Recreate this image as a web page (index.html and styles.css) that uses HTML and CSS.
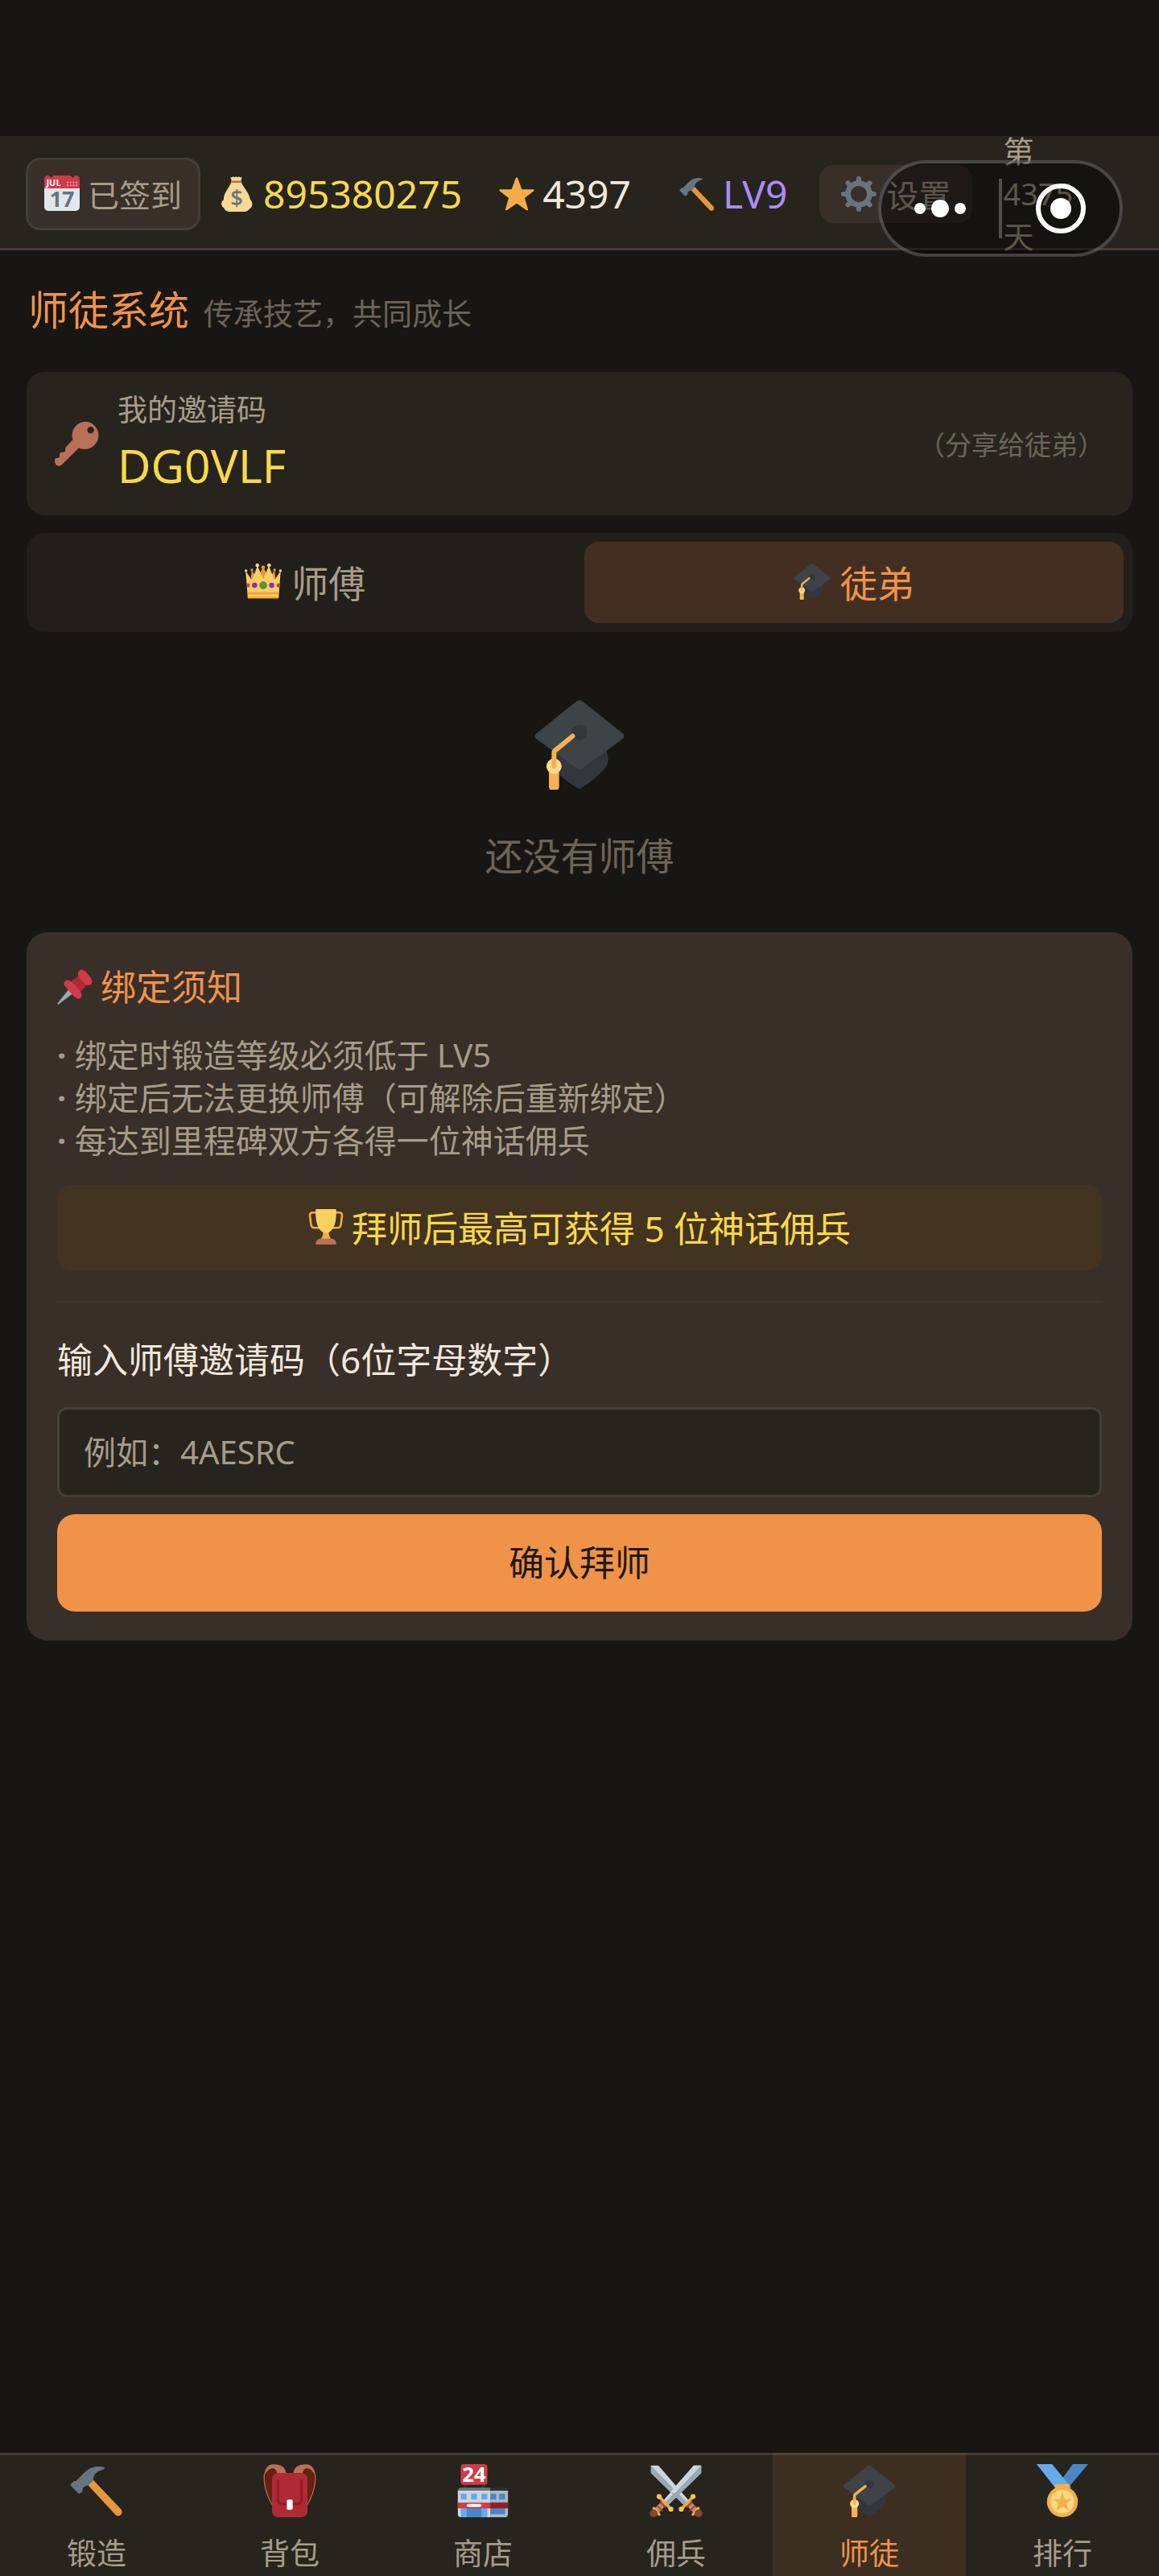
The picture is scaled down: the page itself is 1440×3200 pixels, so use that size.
FILE: index.html
```
<!DOCTYPE html>
<html lang="zh-CN">
<head>
    <meta charset="UTF-8">
    <meta name="viewport" content="width=device-width, initial-scale=1">
    <title>师徒系统</title>
    <link rel="stylesheet" href="styles.css">
</head>
<body>
    <!-- Shared icons -->
    <svg class="sprite" aria-hidden="true">
        <symbol id="i-hammer" viewBox="0 0 36 36">
            <path fill="#e8963a" d="M11 12.500l4-2.500 19.500 20.500c1 1.200.9 2.800-.1 3.800s-2.700 1-3.700-.1L11 13z"/>
            <path fill="#66757f" d="M23 2.200C18.500.8 13.500 2 10 5.500L4.300 11.200c-.5.500-1 .3-1.500.2L1 13c-.8.800-.8 1.400-.2 2l4.700 4.600c.6.600 1.300.5 1.900-.2l1.200-1.300c0-.6-.2-1.400.2-2 1.300-1.200 2.800-1.400 4-2.100l3-2.800c-.4-3.600 2-6.400 7-7.600.9-.2.900-1.200.2-1.400z"/>
        </symbol>
        <symbol id="i-cap" viewBox="0 0 36 36">
            <path fill="#31373d" d="M7 18L18 13l10.500 7.500c1.300 4 1 5.500-1.500 8.200-2.500 2.500-5.500 5-9 7.100-4.200-2.500-8.200-5.300-10-8.500z"/>
            <path fill="#3e4347" d="M16.600 1.500c.8-.7 2-.7 2.800 0l15.400 12.300c.9.700.9 1.700 0 2.400L19.400 27.400c-.9.600-1.900.6-2.800 0L1.200 16.200c-.9-.7-.9-1.700 0-2.400z"/>
            <circle fill="#31373d" cx="18" cy="13.600" r="3"/>
            <rect fill="#f4b255" x="6" y="27.500" width="4" height="9" rx="1.800"/>
            <circle fill="#fed98e" cx="8" cy="26.800" r="3"/>
            <path fill="none" stroke="#f4b255" stroke-width="1.900" stroke-linecap="round" stroke-linejoin="round" d="M15.300 15l-7 5.700c-.2.200-.3.500-.3.900v5.200"/>
        </symbol>
    </svg>

    <div class="app">
        <div class="status-bar"></div>

        <header class="topbar">
            <button class="chip chip-signed" type="button">
                <svg class="icon-sm" viewBox="0 0 36 36">
                    <path fill="#e1e8ed" d="M0 10h36v22c0 2.200-1.800 4-4 4H4c-2.200 0-4-1.800-4-4z"/>
                    <path fill="#d03a49" d="M0 13V4c0-2 1.500-4 4-4h1a2 2 0 0 0 4 0h18a2 2 0 0 0 4 0h1c2.500 0 4 2 4 4v9z"/>
                    <text x="2" y="10.500" class="cal-month">JUL</text>
                    <path stroke="#f4aab0" stroke-width="1.500" stroke-dasharray="1.500 1.500" d="M23 7h11M23 10h11"/>
                    <text x="18" y="32" class="cal-day">17</text>
                </svg>
                已签到
            </button>

            <div class="stat stat-gold">
                <svg class="icon-sm" viewBox="0 0 36 36">
                    <path fill="#f9d995" d="M12 4L10.800.8c1 .6 2 .4 2.800-.5 1 .9 2 .9 3 0 .9.900 1.900.9 2.800 0 1 .9 2 1.100 3.300.5L21.500 5c1 4.500 8.500 11.500 9.500 18.500 3 3 2.500 8-.6 9.500-1.200 2-3.200 3-5.400 3H10c-3 0-5-1.500-5.600-3.600C.8 30 1 25.800 4 24c-.5-7 7-13.500 8-19z"/>
                    <rect fill="#be6b4c" x="11.500" y="4.500" width="11" height="2" rx="1"/>
                    <text x="17.300" y="30" class="bag-sign">$</text>
                </svg>
                <span>895380275</span>
            </div>

            <div class="stat stat-star">
                <svg class="icon-sm" viewBox="0 0 36 36">
                    <path fill="#f4ad47" d="M18 1.200c.6 0 1 .4 1.200 1l4 11h11.300c1.400 0 1.700 1.100.6 2l-9 6.900 3.300 11c.4 1.300-.6 2-1.700 1.200L18 27.600l-9.700 6.700c-1.100.8-2.100.1-1.700-1.200l3.300-11-9-6.900c-1.100-.9-.8-2 .6-2h11.300l4-11c.2-.6.600-1 1.200-1z"/>
                </svg>
                <span>4397</span>
            </div>

            <div class="stat stat-level">
                <svg class="icon-sm"><use href="#i-hammer"/></svg>
                <span>LV9</span>
            </div>

            <button class="chip chip-settings" type="button">
                <svg class="icon-sm" viewBox="0 0 36 36">
                    <g fill="none" stroke="#66757f">
                        <circle cx="18" cy="18" r="11" stroke-width="5.500"/>
                        <path stroke-width="5" stroke-linecap="round" d="M18 2.500V7M18 29v4.500M2.500 18H7M29 18h4.500M7 7l3.200 3.200M25.800 25.800L29 29M7 29l3.200-3.200M25.800 10.200L29 7"/>
                    </g>
                </svg>
                设置
            </button>

            <div class="days">第4375天</div>

            <div class="capsule">
                <button type="button" aria-label="更多">
                    <svg class="dots" viewBox="0 0 64 64">
                        <g fill="#fff"><circle cx="7" cy="32" r="7"/><circle cx="32" cy="32" r="11"/><circle cx="57" cy="32" r="7"/></g>
                    </svg>
                </button>
                <span class="capsule-line"></span>
                <button type="button" aria-label="关闭">
                    <svg class="dots" viewBox="0 0 64 64">
                        <circle cx="32" cy="32" r="28" fill="none" stroke="#fff" stroke-width="6"/>
                        <circle cx="32" cy="32" r="13" fill="#fff"/>
                    </svg>
                </button>
            </div>
        </header>

        <main class="content">
            <div class="page-title">
                <h1>师徒系统</h1>
                <p>传承技艺，共同成长</p>
            </div>

            <section class="invite">
                <svg class="icon-md" viewBox="0 0 36 36">
                    <path fill="#b96f58" fill-rule="evenodd" d="M24 .5a11 11 0 0 1 0 22c-1.700 0-3.300-.3-4.800-1L5.500 35c-1.300 1.200-3.500 1-4.600-.3-1-1.200-1-3.700-.7-4.700.7-.6 2-.2 3.200-.8.800-.7 0-2.300 1-3.600 1-1 2.600-.2 3.600-1.100 1-1 0-2.600 1-3.800l5.400-5.700A11 11 0 0 1 24 .5zm4.700 4a2.700 2.700 0 1 0 0 5.400 2.700 2.700 0 0 0 0-5.400z"/>
                </svg>
                <div class="invite-body">
                    <p class="invite-label">我的邀请码</p>
                    <p class="invite-code">DG0VLF</p>
                </div>
                <p class="invite-hint">（分享给徒弟）</p>
            </section>

            <div class="tabs">
                <button class="tab" type="button">
                    <svg class="icon-tab" viewBox="0 0 36 36">
                        <path fill="#e8963a" d="M7 7l5 9 6-12 6 12 5-9 2 16H5z"/>
                        <circle fill="#e8963a" cx="7" cy="7" r="1.300"/><circle fill="#e8963a" cx="29" cy="7" r="1.300"/><circle fill="#e8963a" cx="18" cy="4.500" r="1.800"/>
                        <path fill="#fad05f" d="M3 34L1 8l6 9 5.500-14L18 16l5.500-13L29 17l6-9-2 26z"/>
                        <g fill="#ffd983"><circle cx="12.300" cy="2.600" r="1.800"/><circle cx="23.700" cy="2.600" r="1.800"/><circle cx="1.300" cy="7.800" r="1.300"/><circle cx="34.700" cy="7.800" r="1.300"/></g>
                        <path fill="#f4a23e" d="M3 28.500h30V31H3zM3 33h30v1.800H3z"/>
                        <circle fill="#5c913b" cx="18" cy="22" r="3.800"/>
                        <circle fill="#9226d6" cx="9.700" cy="22" r="2.600"/><circle fill="#9226d6" cx="26.300" cy="22" r="2.600"/>
                        <ellipse fill="#d03a49" cx="3.300" cy="22" rx="1.800" ry="2"/><ellipse fill="#d03a49" cx="32.700" cy="22" rx="1.800" ry="2"/>
                    </svg>
                    师傅
                </button>
                <button class="tab active" type="button">
                    <svg class="icon-tab"><use href="#i-cap"/></svg>
                    徒弟
                </button>
            </div>

            <section class="empty">
                <svg class="icon-lg"><use href="#i-cap"/></svg>
                <p>还没有师傅</p>
            </section>

            <section class="notice">
                <h2>
                    <svg class="icon-sm" viewBox="0 0 36 36">
                        <path fill="#99aab5" d="M12 20l5 4L1.500 35.500c-.6.500-1.600-.1-1-1z"/>
                        <path fill="#b02a36" d="M13 13l10-7 8 9-8 9z"/>
                        <path fill="#d03a49" d="M22 2c2-2.500 4.500-2 7 .5l5 6c2.300 3 2 5.500 0 7.200-2.300 1.500-5 .2-7.500-2.700l-3-3.500C21 7 20.500 4 22 2zM8 12c2.500-2 5-1 8 2l6.500 7.500c3 3.500 3 6 1.500 7.700-2.500 2-5.500 0-8.500-3.200l-6-7C6.500 15.500 6.300 13.500 8 12z"/>
                    </svg>
                    绑定须知
                </h2>
                <ul class="rules">
                    <li><b>·</b> 绑定时锻造等级必须低于 LV5</li>
                    <li><b>·</b> 绑定后无法更换师傅（可解除后重新绑定）</li>
                    <li><b>·</b> 每达到里程碑双方各得一位神话佣兵</li>
                </ul>
                <p class="reward">
                    <svg class="icon-sm" viewBox="0 0 36 36">
                        <path fill="none" stroke="#f4a742" stroke-width="2.200" d="M8.500 3.500H5C2.500 3.500 1.500 4.500 1.700 7l1.200 9c.3 2.200 1.500 3 3.500 3H12M27.500 3.500H31c2.500 0 3.500 1 3.300 3.500l-1.200 9c-.3 2.200-1.500 3-3.500 3H24"/>
                        <path fill="#f4a742" d="M15 22h6c-.5 4 1 6.500 3 9H12c2-2.500 3.500-5 3-9z"/>
                        <path fill="#fad05f" d="M7.500 1c0-.6.400-1 1-1h19c.6 0 1 .4 1 1 0 10-1 16-4.500 20-2 2.300-4 3.500-6 3.500s-4-1.200-6-3.500C8.500 17 7.500 11 7.500 1z"/>
                        <path fill="#b96f58" d="M7.500 36c0-3 1.500-6 4.500-6h12c3 0 4.500 3 4.500 6z"/>
                    </svg>
                    拜师后最高可获得 5 位神话佣兵
                </p>

                <form class="bind-form">
                    <label for="invite-code">输入师傅邀请码（6位字母数字）</label>
                    <input id="invite-code" type="text" maxlength="6" placeholder="例如：4AESRC">
                    <button class="btn-primary" type="button">确认拜师</button>
                </form>
            </section>
        </main>

        <nav class="tabbar">
            <a class="tabbar-item" href="#forge">
                <svg class="icon-nav"><use href="#i-hammer"/></svg>
                <span>锻造</span>
            </a>
            <a class="tabbar-item" href="#bag">
                <svg class="icon-nav" viewBox="0 0 36 36">
                    <path fill="#662113" d="M4 2c-4 3-5 15 4 27l3-6V4zM32 2c4 3 5 15-4 27l-3-6V4z"/>
                    <path fill="none" stroke="#c1694f" stroke-width=".7" d="M.8 7C0 13 2.500 22 6.500 28M35.200 7c.8 6-1.700 15-5.700 21"/>
                    <path fill="#b96f58" d="M.5 9C.8 4 2.500.2 7 .2c5 0 8.500 1.800 8.500 6.800H9.500C9 3.500 7.500 2.500 5.500 3 3 3.500 1.500 6 .5 9zM35.500 9c-.3-5-2-8.800-6.500-8.800-5 0-8.500 1.800-8.500 6.800h6c.5-3.500 2-4.500 4-4 2.500.5 4 3 5 6z"/>
                    <rect fill="#b02a36" x="6" y="6" width="24" height="30" rx="4"/>
                    <path fill="none" stroke="#941c26" stroke-width="1.800" d="M10 10.500V24c0 2 1 3 3 3h10c2 0 3-1 3-3V10.500"/>
                    <rect fill="#fff" x="16" y="24" width="4" height="7" rx="1"/>
                </svg>
                <span>背包</span>
            </a>
            <a class="tabbar-item" href="#shop">
                <svg class="icon-nav" viewBox="0 0 36 36">
                    <rect fill="#cf3d49" x="3" y="0" width="18" height="14" rx="2"/>
                    <text x="12" y="12" class="shop-sign">24</text>
                    <path fill="#31373d" d="M5 14h2v3H5zM17 14h2v3h-2z"/>
                    <path fill="#cdd7df" d="M1 18h22v18H3c-1.200 0-2-.8-2-2z"/>
                    <path fill="#aab8c2" d="M23 18h12v16c0 1.200-.8 2-2 2H23z"/>
                    <path fill="#66757f" d="M1 18c0-1.200.8-2 2-2h20v2z"/>
                    <path fill="#292f33" d="M23 16h10c1.200 0 2 .8 2 2H23z"/>
                    <path fill="#64abeb" d="M3 20h4v4H3zM10 20h4v4h-4zM17 20h4v4h-4zM3 30h18v6H3z"/>
                    <path fill="#4a86c4" d="M23 20h4v4h-4zM29 20h4v4h-4zM7 30h10v6H7zM23 30h10v4H23z"/>
                    <path fill="#d33c49" d="M1 26h22v4H1z"/>
                    <path fill="#981b26" d="M23 26h12v4H23z"/>
                    <rect fill="#fff" x="7" y="27" width="10" height="2" rx="1"/>
                </svg>
                <span>商店</span>
            </a>
            <a class="tabbar-item" href="#merc">
                <svg class="icon-nav" viewBox="0 0 36 36">
                    <g id="sword">
                        <path fill="#ccd6dd" d="M35 1h-5L9.500 24.500l3 3.500L35 6z"/>
                        <path fill="#99aab5" d="M35 1v5L12.500 28l-2-2z"/>
                        <path stroke="#c78573" stroke-width="4" d="M10 26l-6 6.500"/>
                        <path stroke="#8a4b38" stroke-width="1" d="M7 25.500l4 4M5 28l4 4"/>
                        <path stroke="#f4a742" stroke-width="2" stroke-linecap="round" d="M6.500 22l8 8.500M3 30l3.500 4"/>
                        <circle fill="#ffc24f" cx="6.500" cy="22" r="1.700"/><circle fill="#ffc24f" cx="14.500" cy="30.500" r="1.700"/>
                        <circle fill="#854836" cx="2.800" cy="33.400" r="2.600"/>
                    </g>
                    <use href="#sword" transform="matrix(-1 0 0 1 36 0)"/>
                    <path fill="#ccd6dd" d="M30 1h5L18 20l-4-1z"/>
                    <path fill="#99aab5" d="M35 1v5L16 24.500l-2-1.500z"/>
                </svg>
                <span>佣兵</span>
            </a>
            <a class="tabbar-item active" href="#mentor">
                <svg class="icon-nav"><use href="#i-cap"/></svg>
                <span>师徒</span>
            </a>
            <a class="tabbar-item" href="#rank">
                <svg class="icon-nav" viewBox="0 0 36 36">
                    <path fill="#4a86c4" d="M25 0h10.500L22 16l-5-5z"/>
                    <path fill="#64abeb" d="M.500 0H11l13 16H13z"/>
                    <rect fill="#f4b04a" x="13" y="13.500" width="10" height="5" rx="1"/>
                    <circle fill="#f4b04a" cx="18" cy="25.500" r="10.500"/>
                    <circle fill="#ffd983" cx="18" cy="25.500" r="8"/>
                    <path fill="#f4b04a" d="M18 19l1.700 4.700h4.900l-3.900 3 1.500 4.800-4.200-2.900-4.200 2.900 1.500-4.800-3.900-3h4.900z"/>
                </svg>
                <span>排行</span>
            </a>
        </nav>
    </div>
</body>
</html>
```

FILE: styles.css
```
* {
    box-sizing: border-box;
    margin: 0;
    padding: 0;
}
:root {
    --bg: #181613;
    --surface: #27241e;
    --raised: #382f29;
    --line: #463c35;
    --text: #f1e8da;
    --muted: #a79c89;
    --dim: #6c6457;
    --accent: #f09349;
    --gold: #f9d949;
}
body {
    background: var(--bg);
    color: var(--text);
    font-family: "Noto Sans", "Noto Sans CJK SC", sans-serif;
    font-size: 40px;
}
button, input {
    font: inherit;
    border: none;
    background: none;
    color: inherit;
}
button {
    cursor: pointer;
}
a {
    text-decoration: none;
}
svg {
    display: block;
    flex: none;
    overflow: visible;
}
.sprite {
    position: absolute;
    width: 0;
    height: 0;
}
.app {
    display: flex;
    flex-direction: column;
    min-height: 100vh;
}
.status-bar {
    height: 169px;
}

/* Icon sizes */
.icon-sm {
    width: 44px;
    height: 44px;
}
.icon-tab {
    width: 46px;
    height: 46px;
}
.icon-md {
    width: 56px;
    height: 56px;
}
.icon-lg {
    width: 114px;
    height: 114px;
}
.icon-nav {
    width: 66px;
    height: 66px;
}
.cal-month {
    font: bold 9px "Open Sans", sans-serif;
    fill: #fff;
}
.cal-day {
    font: bold 22px "Open Sans", sans-serif;
    fill: #66757f;
    text-anchor: middle;
}
.bag-sign {
    font: 600 22px "Open Sans", sans-serif;
    fill: #66757f;
    text-anchor: middle;
}
.shop-sign {
    font: bold 14px "Open Sans", sans-serif;
    fill: #fff;
    text-anchor: middle;
}

/* Header */
.topbar {
    position: relative;
    display: flex;
    align-items: center;
    height: 142px;
    padding: 4px 32px 0;
    background: var(--surface);
    border-bottom: 3px solid var(--line);
}
.chip {
    display: flex;
    align-items: center;
    gap: 10px;
    background: var(--raised);
    color: var(--muted);
    border-radius: 18px;
    white-space: nowrap;
}
.chip-signed {
    height: 90px;
    padding: 0 20px 2px;
    border: 3px solid var(--line);
    margin-right: 24px;
    font-size: 39px;
}
.chip-settings {
    height: 72px;
    padding: 0 27px;
    gap: 12px;
    margin-right: 38px;
}
.stat {
    display: flex;
    align-items: center;
    gap: 10px;
    font-size: 48px;
    line-height: 60px;
}
.stat-gold {
    color: var(--gold);
    margin-right: 46px;
}
.stat-star {
    margin-right: 60px;
}
.stat-level {
    color: #ab8cf9;
    margin-right: 40px;
}
.days {
    width: 92px;
    color: var(--muted);
    font-size: 38px;
    line-height: 53px;
}
.capsule {
    position: absolute;
    top: 30px;
    right: 45px;
    display: flex;
    align-items: center;
    width: 304px;
    height: 120px;
    border: 4px solid rgba(255, 255, 255, 0.22);
    border-radius: 60px;
    background: rgba(0, 0, 0, 0.45);
}
.capsule button {
    flex: 1;
    display: flex;
    justify-content: center;
}
.capsule-line {
    width: 4px;
    height: 74px;
    background: rgba(255, 255, 255, 0.25);
}
.dots {
    width: 64px;
    height: 64px;
}

/* Content */
.content {
    flex: 1;
    padding: 44px 33px;
}
.page-title {
    display: flex;
    align-items: baseline;
    gap: 18px;
    padding: 0 2px;
    margin-bottom: 42px;
    line-height: 60px;
}
.page-title h1 {
    color: var(--accent);
    font-size: 50px;
    font-weight: 400;
}
.page-title p {
    color: var(--dim);
    font-size: 37px;
}
.invite {
    display: flex;
    align-items: center;
    gap: 22px;
    height: 178px;
    padding: 0 35px;
    margin-bottom: 22px;
    border-radius: 22px;
    background: var(--surface);
}
.invite-body {
    flex: 1;
}
.invite-label {
    color: var(--muted);
    font-size: 37px;
    line-height: 54px;
}
.invite-code {
    color: var(--gold);
    font-size: 57px;
    line-height: 84px;
}
.invite-hint {
    color: var(--dim);
    font-size: 33px;
}
.tabs {
    display: flex;
    gap: 11px;
    padding: 11px;
    border-radius: 22px;
    background: #221f1a;
}
.tab {
    flex: 1;
    display: flex;
    align-items: center;
    justify-content: center;
    gap: 12px;
    height: 101px;
    padding-bottom: 4px;
    border-radius: 18px;
    color: var(--muted);
    font-size: 46px;
}
.tab.active {
    background: #432f21;
    color: var(--accent);
}
.empty {
    display: flex;
    flex-direction: column;
    align-items: center;
    gap: 47px;
    padding: 82px 0 60px;
    color: var(--dim);
    font-size: 47px;
    line-height: 70px;
}

/* Binding card */
.notice {
    padding: 36px 38px;
    border-radius: 26px;
    background: var(--raised);
}
.notice h2 {
    display: flex;
    align-items: center;
    gap: 10px;
    margin-bottom: 26px;
    color: var(--accent);
    font-size: 44px;
    font-weight: 400;
    line-height: 64px;
}
.rules {
    list-style: none;
    margin-bottom: 29px;
    color: var(--muted);
    line-height: 53px;
}
.reward {
    display: flex;
    align-items: center;
    justify-content: center;
    gap: 10px;
    height: 106px;
    padding-bottom: 2px;
    border-radius: 18px;
    background: #433321;
    color: var(--gold);
    font-size: 44px;
}
.bind-form {
    display: flex;
    flex-direction: column;
    margin-top: 38px;
    padding-top: 38px;
    border-top: 2px solid #3d342e;
}
.bind-form label {
    margin-bottom: 26px;
    font-size: 44px;
    line-height: 66px;
}
.bind-form input {
    height: 112px;
    padding: 0 30px 2px;
    margin-bottom: 21px;
    border: 3px solid #453f37;
    border-radius: 12px;
    background: var(--surface);
    font-size: 40px;
}
.bind-form input::placeholder {
    color: var(--muted);
    opacity: 1;
}
.btn-primary {
    height: 121px;
    padding-bottom: 6px;
    border-radius: 22px;
    background: var(--accent);
    color: #20180f;
    font-size: 44px;
}

/* Bottom navigation */
.tabbar {
    position: sticky;
    bottom: 0;
    display: flex;
    height: 153px;
    background: var(--surface);
    box-shadow: inset 0 3px #413a32;
}
.tabbar-item {
    flex: 1;
    display: flex;
    flex-direction: column;
    align-items: center;
    gap: 18px;
    padding-top: 14px;
    color: var(--muted);
    font-size: 37px;
    line-height: 54px;
}
.tabbar-item.active {
    background: #3d2e22;
    box-shadow: inset 0 3px #57432f;
    color: var(--accent);
}
```
